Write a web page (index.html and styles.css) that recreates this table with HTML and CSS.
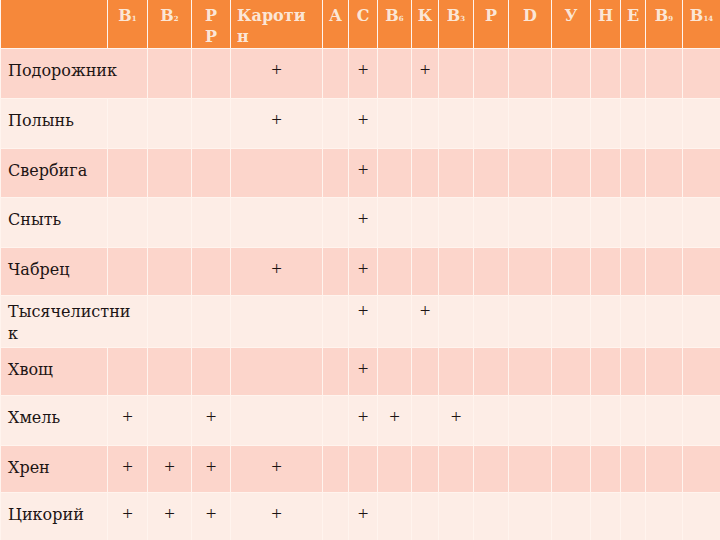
FILE: index.html
```html
<!DOCTYPE html>
<html lang="ru">
<head>
<meta charset="utf-8">
<title>Таблица</title>
<link rel="stylesheet" href="styles.css">
</head>
<body>
<table class="grid">
  <colgroup>
    <col class="c0"><col class="c1"><col class="c2"><col class="c3"><col class="c4"><col class="c5"><col class="c6"><col class="c7"><col class="c8"><col class="c9"><col class="c10"><col class="c11"><col class="c12"><col class="c13"><col class="c14"><col class="c15"><col class="c16">
  </colgroup>
  <thead>
    <tr class="head">
      <th></th>
      <th>B<sub>1</sub></th>
      <th>B<sub>2</sub></th>
      <th>Р<br>Р</th>
      <th class="left">Кароти<br>н</th>
      <th>А</th>
      <th>С</th>
      <th>B<sub>6</sub></th>
      <th>К</th>
      <th>B<sub>3</sub></th>
      <th>Р</th>
      <th>D</th>
      <th>У</th>
      <th>Н</th>
      <th>Е</th>
      <th>B<sub>9</sub></th>
      <th>B<sub>14</sub></th>
    </tr>
  </thead>
  <tbody>
    <tr class="odd r1">
      <td class="name" colspan="2">Подорожник</td><td></td><td></td><td>+</td><td></td><td>+</td><td></td><td>+</td><td></td><td></td><td></td><td></td><td></td><td></td><td></td><td></td>
    </tr>
    <tr class="even r2">
      <td class="name">Полынь</td><td></td><td></td><td></td><td>+</td><td></td><td>+</td><td></td><td></td><td></td><td></td><td></td><td></td><td></td><td></td><td></td><td></td>
    </tr>
    <tr class="odd r3">
      <td class="name">Свербига</td><td></td><td></td><td></td><td></td><td></td><td>+</td><td></td><td></td><td></td><td></td><td></td><td></td><td></td><td></td><td></td><td></td>
    </tr>
    <tr class="even r4">
      <td class="name">Сныть</td><td></td><td></td><td></td><td></td><td></td><td>+</td><td></td><td></td><td></td><td></td><td></td><td></td><td></td><td></td><td></td><td></td>
    </tr>
    <tr class="odd r5">
      <td class="name">Чабрец</td><td></td><td></td><td></td><td>+</td><td></td><td>+</td><td></td><td></td><td></td><td></td><td></td><td></td><td></td><td></td><td></td><td></td>
    </tr>
    <tr class="even r6">
      <td class="name wrap" colspan="2">Тысячелистни<br>к</td><td></td><td></td><td></td><td></td><td class="pw">+</td><td></td><td class="pw">+</td><td></td><td></td><td></td><td></td><td></td><td></td><td></td><td></td>
    </tr>
    <tr class="odd r7">
      <td class="name">Хвощ</td><td></td><td></td><td></td><td></td><td></td><td>+</td><td></td><td></td><td></td><td></td><td></td><td></td><td></td><td></td><td></td><td></td>
    </tr>
    <tr class="even r8">
      <td class="name">Хмель</td><td>+</td><td></td><td>+</td><td></td><td></td><td>+</td><td>+</td><td></td><td>+</td><td></td><td></td><td></td><td></td><td></td><td></td><td></td>
    </tr>
    <tr class="odd r9">
      <td class="name">Хрен</td><td>+</td><td>+</td><td>+</td><td>+</td><td></td><td></td><td></td><td></td><td></td><td></td><td></td><td></td><td></td><td></td><td></td><td></td>
    </tr>
    <tr class="even r10">
      <td class="name">Цикорий</td><td>+</td><td>+</td><td>+</td><td>+</td><td></td><td>+</td><td></td><td></td><td></td><td></td><td></td><td></td><td></td><td></td><td></td><td></td>
    </tr>
  </tbody>
</table>
</body>
</html>
```

FILE: styles.css
```css
html, body {
  margin: 0;
  padding: 0;
  background: #fdede6;
}

.grid {
  width: 720px;
  border-collapse: collapse;
  table-layout: fixed;
  font-family: "DejaVu Serif", "Liberation Serif", serif;
  color: #1c1414;
}

.c0 { width: 107px; }
.c1 { width: 40px; }
.c2 { width: 44px; }
.c3 { width: 39px; }
.c4 { width: 92px; }
.c5 { width: 26px; }
.c6 { width: 29px; }
.c7 { width: 34px; }
.c8 { width: 27px; }
.c9 { width: 35px; }
.c10 { width: 35px; }
.c11 { width: 43px; }
.c12 { width: 39px; }
.c13 { width: 30px; }
.c14 { width: 25px; }
.c15 { width: 37px; }
.c16 { width: 38px; }

.grid th,
.grid td {
  border: 1px solid #fff4ee;
  padding: 0;
  vertical-align: top;
  text-align: center;
  overflow: visible;
  white-space: nowrap;
}

.head {
  height: 48px;
  background: #f6883a;
}

.grid .head th {
  color: #fbe6d6;
  font-weight: bold;
  font-size: 16px;
  line-height: 21px;
  padding-top: 5px;
  border-top: none;
}

.grid .head th.left {
  text-align: left;
  padding-left: 6px;
}

.head sub {
  font-size: 7px;
  vertical-align: baseline;
}

.r1 { height: 50px; }
.r2 { height: 50px; }
.r3 { height: 49px; }
.r4 { height: 50px; }
.r5 { height: 48px; }
.r6 { height: 52px; }
.r7 { height: 48px; }
.r8 { height: 50px; }
.r9 { height: 47px; }
.r10 { height: 48px; }

.grid tbody td {
  font-family: "Liberation Serif", serif;
  font-size: 19px;
  line-height: 22px;
  padding-top: 10px;
}

.grid tbody td.name {
  font-family: "DejaVu Serif", "Liberation Serif", serif;
  font-size: 16px;
  text-align: left;
  padding-left: 7px;
  padding-top: 11px;
}

.grid tbody td.wrap {
  padding-top: 5px;
}

.grid tbody td.pw {
  padding-top: 4px;
}

.odd {
  background: #fcd5cb;
}

.even {
  background: #fdede6;
}
```
